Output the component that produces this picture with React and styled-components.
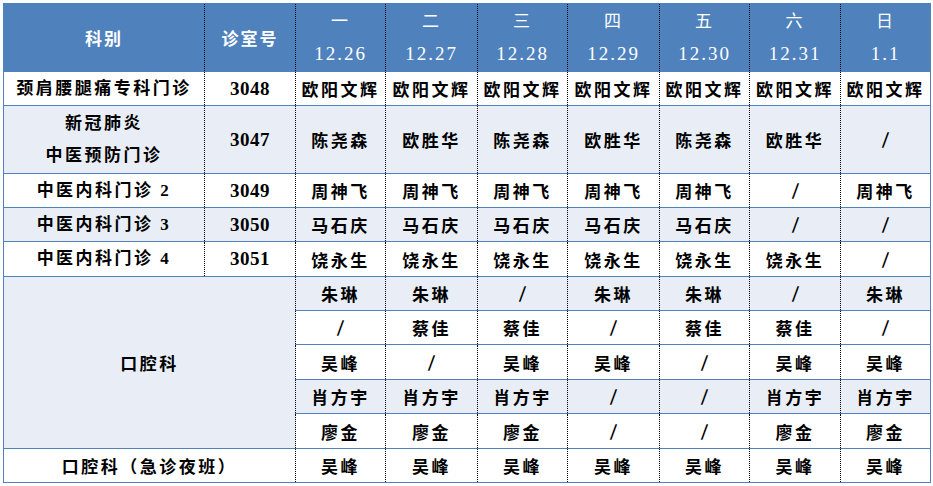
import React from 'react'
import styled, { createGlobalStyle } from 'styled-components'

const GlobalStyle = createGlobalStyle`
  html, body {
    margin: 0;
    padding: 0;
    background: #ffffff;
  }
  body {
    padding: 3px;
    font-family: "Liberation Serif", "Noto Sans CJK SC", serif;
  }
`

const BLUE = '#4f81bd'
const BAND = '#e9eef6'

const widths = [201, 91, 90, 92, 90, 92, 90, 91, 90]

const days = [
    ['一', '12.26'],
    ['二', '12.27'],
    ['三', '12.28'],
    ['四', '12.29'],
    ['五', '12.30'],
    ['六', '12.31'],
    ['日', '1.1'],
]

const clinics = [
    { dept: ['颈肩腰腿痛专科门诊'], room: '3048', h: 34, band: false, cells: Array(7).fill('欧阳文辉') },
    { dept: ['新冠肺炎', '中医预防门诊'], room: '3047', h: 68, band: true, cells: ['陈尧森', '欧胜华', '陈尧森', '欧胜华', '陈尧森', '欧胜华', '/'] },
    { dept: ['中医内科门诊 2'], room: '3049', h: 34, band: false, cells: ['周神飞', '周神飞', '周神飞', '周神飞', '周神飞', '/', '周神飞'] },
    { dept: ['中医内科门诊 3'], room: '3050', h: 34, band: true, cells: ['马石庆', '马石庆', '马石庆', '马石庆', '马石庆', '/', '/'] },
    { dept: ['中医内科门诊 4'], room: '3051', h: 35, band: false, cells: ['饶永生', '饶永生', '饶永生', '饶永生', '饶永生', '饶永生', '/'] },
]

const oral = [
    { h: 34, band: true, cells: ['朱琳', '朱琳', '/', '朱琳', '朱琳', '/', '朱琳'] },
    { h: 34, band: false, cells: ['/', '蔡佳', '蔡佳', '/', '蔡佳', '蔡佳', '/'] },
    { h: 35, band: false, cells: ['吴峰', '/', '吴峰', '吴峰', '/', '吴峰', '吴峰'] },
    { h: 34, band: true, cells: ['肖方宇', '肖方宇', '肖方宇', '/', '/', '肖方宇', '肖方宇'] },
    { h: 35, band: false, cells: ['廖金', '廖金', '廖金', '/', '/', '廖金', '廖金'] },
]

const night = Array(7).fill('吴峰')

function Duty({ name }) {
    return <Cell>{name === '/' ? <Slash>/</Slash> : name}</Cell>
}

function App() {
    return (
        <>
            <GlobalStyle />
            <Table>
                <colgroup>
                    {widths.map((w, i) => (
                        <col key={i} style={{ width: w }} />
                    ))}
                </colgroup>
                <thead>
                    <Row $h={68}>
                        <HeadCell $first>科别</HeadCell>
                        <HeadCell>诊室号</HeadCell>
                        {days.map(([d, date]) => (
                            <HeadCell key={date}>
                                <DayLine>{d}</DayLine>
                                <DateLine>{date}</DateLine>
                            </HeadCell>
                        ))}
                    </Row>
                </thead>
                <tbody>
                    {clinics.map((r) => (
                        <Row key={r.room} $h={r.h} $band={r.band}>
                            <Cell $first>
                                {r.dept.map((t) => (
                                    <Line key={t}>{t}</Line>
                                ))}
                            </Cell>
                            <Cell>
                                <Num>{r.room}</Num>
                            </Cell>
                            {r.cells.map((c, i) => (
                                <Duty key={i} name={c} />
                            ))}
                        </Row>
                    ))}
                    {oral.map((r, idx) => (
                        <Row key={idx} $h={r.h} $band={r.band}>
                            {idx === 0 && (
                                <MergedCell $first colSpan={2} rowSpan={oral.length}>
                                    口腔科
                                </MergedCell>
                            )}
                            {r.cells.map((c, i) => (
                                <Duty key={i} name={c} />
                            ))}
                        </Row>
                    ))}
                    <Row $h={34}>
                        <Cell $first colSpan={2}>口腔科（急诊夜班）</Cell>
                        {night.map((c, i) => (
                            <Duty key={i} name={c} />
                        ))}
                    </Row>
                </tbody>
            </Table>
        </>
    )
}

export default App

const Table = styled.table`
    border-collapse: collapse;
    table-layout: fixed;
    width: 927px;
    border: 1px solid ${BLUE};
`
const Row = styled.tr`
    height: ${(p) => p.$h}px;
    background: ${(p) => (p.$band ? BAND : '#ffffff')};
`
const HeadCell = styled.th`
    background: ${BLUE};
    color: #ffffff;
    font-size: 17px;
    font-weight: 700;
    letter-spacing: 2px;
    text-align: center;
    vertical-align: middle;
    padding: 0;
    border-left: ${(p) => (p.$first ? `1px solid ${BLUE}` : '1px dotted #000')};
    border-bottom: none;
`
const Cell = styled.td`
    color: #000000;
    font-size: 17px;
    font-weight: 700;
    letter-spacing: 2.5px;
    text-align: center;
    vertical-align: middle;
    padding: 0;
    white-space: nowrap;
    border-top: 1px solid ${BLUE};
    border-bottom: 1px solid ${BLUE};
    border-left: ${(p) => (p.$first ? `1px solid ${BLUE}` : '1px dotted #000')};
`
const MergedCell = styled(Cell)`
    background: ${BAND};
`
const Line = styled.div`
    line-height: 32px;
`
const DayLine = styled.div`
    line-height: 32px;
    font-weight: 400;
`
const DateLine = styled.div`
    line-height: 32px;
    font-size: 19px;
    font-weight: 400;
    letter-spacing: 2px;
`
const Num = styled.span`
    font-size: 19px;
    letter-spacing: 0.5px;
`
const Slash = styled.span`
    display: inline-block;
    font-family: "DejaVu Sans", sans-serif;
    font-size: 19px;
    font-weight: 700;
    letter-spacing: 0;
    transform: scaleX(0.8) skewX(-8deg);
`
